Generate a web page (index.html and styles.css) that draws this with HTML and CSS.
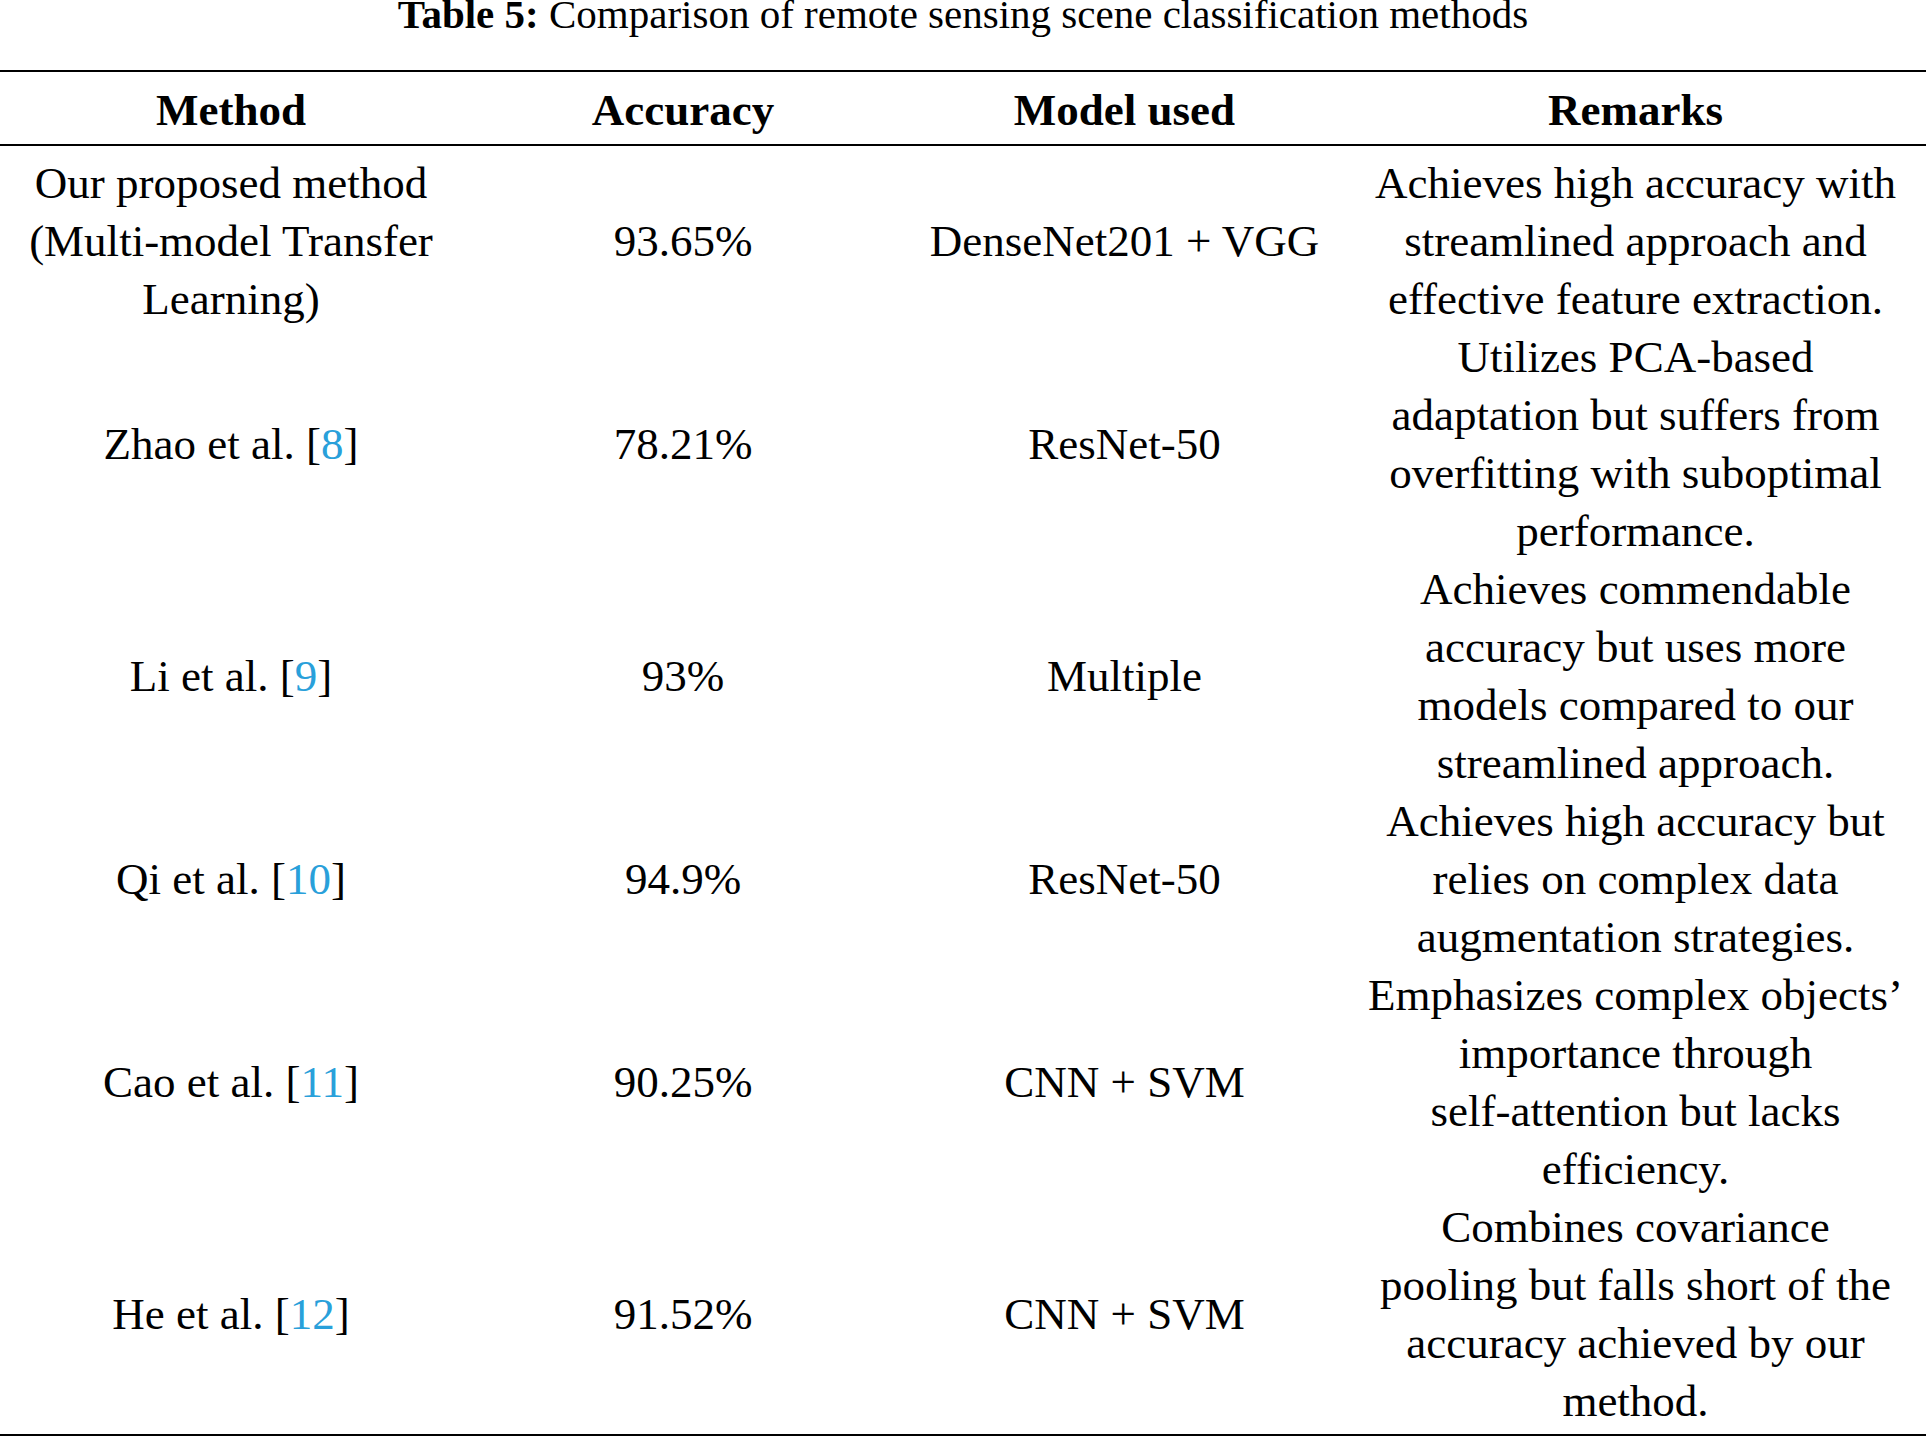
FILE: index.html
```html
<!DOCTYPE html>
<html lang="en">
<head>
<meta charset="utf-8">
<title>Table 5</title>
<link rel="stylesheet" href="styles.css">
</head>
<body>
<p class="caption"><b>Table 5:</b> Comparison of remote sensing scene classification methods</p>
<table class="cmp">
  <colgroup>
    <col class="c-method">
    <col class="c-acc">
    <col class="c-model">
    <col class="c-rem">
  </colgroup>
  <thead>
    <tr><th>Method</th><th>Accuracy</th><th>Model used</th><th>Remarks</th></tr>
  </thead>
  <tbody>
    <tr>
      <td>Our proposed method<br>(Multi-model Transfer<br>Learning)</td>
      <td>93.65%</td>
      <td>DenseNet201 + VGG</td>
      <td>Achieves high accuracy with<br>streamlined approach and<br>effective feature extraction.</td>
    </tr>
    <tr>
      <td>Zhao et al. [<span class="ref">8</span>]</td>
      <td>78.21%</td>
      <td>ResNet-50</td>
      <td>Utilizes PCA-based<br>adaptation but suffers from<br>overfitting with suboptimal<br>performance.</td>
    </tr>
    <tr>
      <td>Li et al. [<span class="ref">9</span>]</td>
      <td>93%</td>
      <td>Multiple</td>
      <td>Achieves commendable<br>accuracy but uses more<br>models compared to our<br>streamlined approach.</td>
    </tr>
    <tr>
      <td>Qi et al. [<span class="ref">10</span>]</td>
      <td>94.9%</td>
      <td>ResNet-50</td>
      <td>Achieves high accuracy but<br>relies on complex data<br>augmentation strategies.</td>
    </tr>
    <tr>
      <td>Cao et al. [<span class="ref">11</span>]</td>
      <td>90.25%</td>
      <td>CNN + SVM</td>
      <td>Emphasizes complex objects’<br>importance through<br>self-attention but lacks<br>efficiency.</td>
    </tr>
    <tr>
      <td>He et al. [<span class="ref">12</span>]</td>
      <td>91.52%</td>
      <td>CNN + SVM</td>
      <td>Combines covariance<br>pooling but falls short of the<br>accuracy achieved by our<br>method.</td>
    </tr>
  </tbody>
</table>
</body>
</html>
```

FILE: styles.css
```css
html, body {
  margin: 0;
  padding: 0;
  background: #ffffff;
}

body {
  width: 1926px;
  font-family: "Liberation Serif", "Times New Roman", serif;
  color: #000000;
}

.caption {
  margin: 0 0 41px;
  font-size: 41px;
  line-height: 29px;
  text-align: center;
  white-space: nowrap;
}

.cmp {
  width: 1926px;
  table-layout: fixed;
  border-collapse: separate;
  border-spacing: 0;
  font-size: 45px;
  line-height: 58px;
}

.c-method { width: 462px; }
.c-acc { width: 442px; }
.c-model { width: 441px; }
.c-rem { width: 581px; }

.cmp th {
  padding: 8.5px 8px 5px;
  font-weight: bold;
  text-align: center;
  vertical-align: middle;
  border-top: 2px solid #000;
  border-bottom: 2px solid #000;
  white-space: nowrap;
}

.cmp td {
  padding: 0 8px;
  text-align: center;
  vertical-align: middle;
  white-space: nowrap;
}

.cmp tbody tr:first-child td {
  padding-top: 8.5px;
}

.cmp tbody tr:last-child td {
  padding-bottom: 3.5px;
  border-bottom: 2px solid #000;
}

.ref {
  color: #29a0da;
}
```
